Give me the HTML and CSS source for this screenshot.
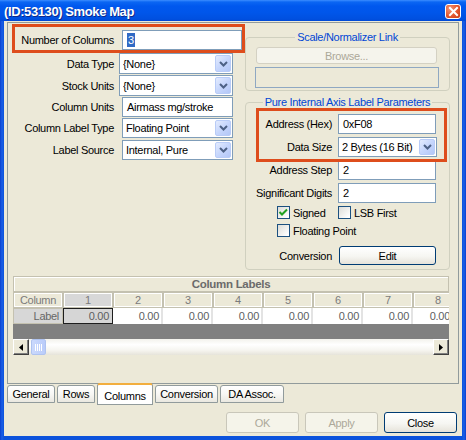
FILE: index.html
```html
<!DOCTYPE html>
<html>
<head>
<meta charset="utf-8">
<title>Smoke Map</title>
<link rel="stylesheet" href="styles.css">
</head>
<body>
<div class="window">
  <div class="titlebar">
    <span class="title">(ID:53130) Smoke Map</span>
    <span class="close"><svg width="11" height="11" viewBox="0 0 11 11"><path d="M2 2 L9 9 M9 2 L2 9" stroke="#fff" stroke-width="2" stroke-linecap="square"/></svg></span>
  </div>
  <div class="client">
    <div class="panel">
      <div class="top">
        <div class="left">
          <div class="row r1"><span class="lbl">Number of Columns</span><span class="edit ctl w120"><span class="hl">3</span></span></div>
          <div class="row r2"><span class="lbl">Data Type</span><span class="combo wide h21"><span class="ctext">{None}</span><span class="dd"><svg width="9" height="6" viewBox="0 0 9 6"><path d="M1 1 L4.5 4.5 L8 1" fill="none" stroke="#4D6185" stroke-width="2"/></svg></span></span></div>
          <div class="row r2"><span class="lbl">Stock Units</span><span class="combo wide h21"><span class="ctext">{None}</span><span class="dd"><svg width="9" height="6" viewBox="0 0 9 6"><path d="M1 1 L4.5 4.5 L8 1" fill="none" stroke="#4D6185" stroke-width="2"/></svg></span></span></div>
          <div class="row r2"><span class="lbl">Column Units</span><span class="edit ctl w111">Airmass mg/stroke</span></div>
          <div class="row r3"><span class="lbl">Column Label Type</span><span class="combo ctl w111"><span class="ctext">Floating Point</span><span class="dd"><svg width="9" height="6" viewBox="0 0 9 6"><path d="M1 1 L4.5 4.5 L8 1" fill="none" stroke="#4D6185" stroke-width="2"/></svg></span></span></div>
          <div class="row"><span class="lbl">Label Source</span><span class="combo ctl w111"><span class="ctext">Internal, Pure</span><span class="dd"><svg width="9" height="6" viewBox="0 0 9 6"><path d="M1 1 L4.5 4.5 L8 1" fill="none" stroke="#4D6185" stroke-width="2"/></svg></span></span></div>
        </div>
        <div class="right">
          <div class="group g1">
            <div class="gtitle">Scale/Normalizer Link</div>
            <div class="browse">Browse...</div>
            <div class="dfield"></div>
          </div>
          <div class="group g2">
            <div class="gtitle">Pure Internal Axis Label Parameters</div>
            <div class="prows">
              <div class="prow"><span class="plbl">Address (Hex)</span><span class="edit pctl">0xF08</span></div>
              <div class="prow"><span class="plbl">Data Size</span><span class="combo pcombo"><span class="ctext">2 Bytes (16 Bit)</span><span class="dd"><svg width="9" height="6" viewBox="0 0 9 6"><path d="M1 1 L4.5 4.5 L8 1" fill="none" stroke="#4D6185" stroke-width="2"/></svg></span></span></div>
              <div class="prow"><span class="plbl">Address Step</span><span class="edit pctl">2</span></div>
              <div class="prow"><span class="plbl">Significant Digits</span><span class="edit pctl">2</span></div>
            </div>
            <div class="checks">
              <div class="ckrow">
                <span class="ckitem w61"><span class="ck"><svg width="11" height="11" viewBox="0 0 11 11"><path d="M1.5 5 L4 7.5 L9 2.5" fill="none" stroke="#21A121" stroke-width="2"/></svg></span><span class="cktext">Signed</span></span>
                <span class="ckitem"><span class="ck"></span><span class="cktext">LSB First</span></span>
              </div>
              <div class="ckrow">
                <span class="ckitem"><span class="ck"></span><span class="cktext">Floating Point</span></span>
              </div>
            </div>
            <div class="conv"><span class="plbl">Conversion</span><span class="btn editbtn">Edit</span></div>
          </div>
        </div>
      </div>
      <div class="grid">
        <div class="ghead">Column Labels</div>
        <div class="grow">
          <span class="hc">Column</span><span class="hc sel">1</span><span class="hc">2</span><span class="hc">3</span><span class="hc">4</span><span class="hc">5</span><span class="hc">6</span><span class="hc">7</span><span class="hc">8</span>
        </div>
        <div class="grow">
          <span class="lc">Label</span><span class="vc cur">0.00</span><span class="vc">0.00</span><span class="vc">0.00</span><span class="vc">0.00</span><span class="vc">0.00</span><span class="vc">0.00</span><span class="vc">0.00</span><span class="vc last">0.00</span>
        </div>
        <div class="gdark"></div>
        <div class="hscroll">
          <span class="sbtn"><svg width="4" height="7" viewBox="0 0 4 7"><polygon points="4,0 0,3.5 4,7" fill="#000"/></svg></span>
          <span class="thumb"><svg width="7" height="7" viewBox="0 0 7 7"><path d="M0.5 0 V7 M2.5 0 V7 M4.5 0 V7 M6.5 0 V7" stroke="#fff" stroke-width="1"/></svg></span>
          <span class="track"></span>
          <span class="sbtn"><svg width="4" height="7" viewBox="0 0 4 7"><polygon points="0,0 4,3.5 0,7" fill="#000"/></svg></span>
        </div>
      </div>
    </div>
    <div class="tabs">
      <span class="tab t1">General</span>
      <span class="tab t2">Rows</span>
      <span class="tab t3 on">Columns</span>
      <span class="tab t4">Conversion</span>
      <span class="tab t5">DA Assoc.</span>
    </div>
    <div class="buttons">
      <span class="btn dis">OK</span>
      <span class="btn dis">Apply</span>
      <span class="btn">Close</span>
    </div>
  </div>
  <div class="mark m1"></div>
  <div class="mark m2"></div>
</div>
</body>
</html>
```

FILE: styles.css
```css
* { box-sizing: border-box; }
html, body { margin: 0; padding: 0; }
body {
  width: 466px; height: 440px; overflow: hidden; background: #fff;
  font-family: "Liberation Sans", Arial, sans-serif; font-size: 11px;
  letter-spacing: -0.3px; color: #000;
}
.window {
  position: relative; width: 466px; height: 440px;
  display: flex; flex-direction: column;
  background: linear-gradient(90deg, #0A3FCF, #1A5FE6 2px, #0B52DC 4px, #0B52DC 462px, #1A5FE6 464px, #0A3FCF);
}
.titlebar {
  height: 21px; flex: none; display: flex; align-items: center;
  justify-content: space-between; padding: 1px 5px 0 4px;
  background: linear-gradient(#3C8DFF 0, #0B66F3 2px, #0058EE 6px, #0056EA 60%, #0050E0 90%, #0049D6 100%);
}
.title {
  color: #fff; font-weight: bold; font-size: 13px; letter-spacing: -0.4px;
  text-shadow: 1px 1px 0 #0F2A8A;
}
.close {
  width: 16px; height: 15px; border: 1px solid #fff; border-radius: 3px;
  background: radial-gradient(circle at 30% 30%, #F39677, #E2552D 55%, #C53A14);
  display: flex; align-items: center; justify-content: center;
}
.client {
  flex: 1; margin: 0 4px 4px; background: #ECE9D8;
  padding: 1px 3px 0 3px; display: flex; flex-direction: column;
}
.panel { height: 362px; flex: none; border: 1px solid #919B9C; background: #ECE9D8; }
.top { display: flex; align-items: flex-start; }
.left { width: 237px; padding-top: 7px; }
.row { display: flex; align-items: center; margin-bottom: 1px; }
.row.r1 { margin-bottom: 3px; }
.row.r3 { margin-bottom: 2px; }
.lbl { width: 106px; flex: none; text-align: right; white-space: nowrap; }
.ctl { margin-left: 8px; }
.w120 { width: 120px; }
.w111 { width: 111px; }
.edit {
  height: 20px; border: 1px solid #7F9DB9; background: #fff; padding: 0 4px;
  display: flex; align-items: center; white-space: nowrap; overflow: hidden; flex: none;
}
.hl { background: #316AC5; color: #fff; padding: 1px 1px; }
.combo {
  height: 20px; border: 1px solid #7F9DB9; background: #fff; flex: none;
  display: flex; align-items: center; padding: 0 1px 0 3px;
}
.combo.h21 { height: 21px; }
.combo.wide { margin-left: 5px; width: 114px; }
.ctext { flex: 1; white-space: nowrap; overflow: hidden; }
.dd {
  flex: none; align-self: stretch; margin: 1px 0; width: 16px;
  border: 1px solid #B9CCF7; border-radius: 2px;
  background: linear-gradient(135deg, #E4ECFE, #C6D6FC 50%, #B3C7F7);
  display: flex; align-items: center; justify-content: center;
}
.right { width: 205px; }
.group { border: 1px solid #D0D0BF; border-radius: 4px; }
.g1 { margin-top: 14px; padding-bottom: 2px; }
.gtitle {
  display: table; margin: -7px auto 0; padding: 0 2px; line-height: 13px;
  background: #ECE9D8; color: #0046D5; white-space: nowrap;
}
.browse {
  margin: 3px 0 0 10px; width: 181px; height: 17px;
  border: 1px solid #D4D1C3; border-radius: 3px; background: #F5F4EC;
  color: #ACA899; display: flex; align-items: center; justify-content: center;
}
.dfield { margin: 3px 0 0 9px; width: 184px; height: 21px; border: 1px solid #8FA8C2; }
.g2 { margin-top: 11px; padding-bottom: 4px; }
.prows { margin-top: 5px; }
.prow { display: flex; align-items: center; margin-bottom: 3px; }
.plbl { width: 86px; flex: none; text-align: right; white-space: nowrap; }
.pctl { margin-left: 6px; width: 98px; }
.pcombo { margin-left: 6px; width: 99px; }
.checks { margin-top: 3px; padding-left: 31px; }
.ckrow { display: flex; align-items: center; height: 13px; }
.ckrow + .ckrow { margin-top: 5px; }
.ckitem { display: flex; align-items: center; }
.ckitem.w61 { width: 61px; }
.ck {
  width: 13px; height: 13px; flex: none; border: 1px solid #1C5180;
  background: linear-gradient(135deg, #DCDCD7, #FFFFFF 90%);
  display: flex; align-items: center; justify-content: center;
}
.cktext { margin-left: 3px; white-space: nowrap; }
.conv { display: flex; align-items: center; margin-top: 9px; }
.btn {
  width: 73px; height: 21px; flex: none; border: 1px solid #003C74; border-radius: 3px;
  display: flex; align-items: center; justify-content: center;
  background: linear-gradient(#FFFFFF, #F6F6F2 55%, #E6E3DA);
}
.btn.dis { border-color: #C9C7BA; background: #F5F4EA; color: #ACA899; }
.editbtn { margin-left: 7px; width: 97px; height: 19px; }
.grid { margin: 6px 0 0 5px; width: 436px; overflow: hidden; }
.ghead {
  height: 16px; border: 1px solid #C4C1B0; box-shadow: inset 1px 1px 0 #fff;
  text-align: center; font-weight: bold; color: #6B6B6B; line-height: 14px;
  font-size: 11.5px;
}
.grow { display: flex; height: 16px; }
.hc {
  flex: none; width: 50px; border: 1px solid #C4C1B0;
  box-shadow: inset 1px 1px 0 #fff, inset -1px -1px 0 #fff;
  text-align: center; color: #7B7B7B; line-height: 14px;
}
.hc.sel { background: #D8D8D8; }
.lc {
  flex: none; width: 50px; background: #D7D7D7; border: 1px solid #C4C1B0;
  text-align: right; padding-right: 3px; color: #666; line-height: 14px;
}
.vc {
  flex: none; width: 50px; background: #fff; border-right: 2px solid #E3E3E3;
  text-align: right; padding-right: 2px; color: #5E5E5E; line-height: 16px;
}
.vc.last { padding-right: 11px; }
.vc.cur { background: #D6D6D6; border: 1px solid #1E1E1E; line-height: 14px; padding-right: 3px; }
.gdark { height: 15px; background: #808080; }
.hscroll {
  height: 16px; display: flex;
  background: linear-gradient(#F3F2EC, #FFFFFF 35%, #F6F5F0 70%, #E6E4DA);
}
.sbtn {
  width: 16px; height: 16px; flex: none; background: #ECE9D8;
  border: 1px solid; border-color: #FFFFFF #404040 #404040 #FFFFFF;
  box-shadow: inset -1px -1px 0 #808080;
  display: flex; align-items: center; justify-content: center;
}
.thumb {
  width: 15px; flex: none; margin-left: 2px; border: 1px solid #AFC3F0; border-radius: 2px;
  background: linear-gradient(90deg, #CBD9FC, #BACCFA);
  display: flex; align-items: center; justify-content: center;
}
.track { flex: 1; }
.tabs { display: flex; align-items: flex-start; gap: 2px; margin-top: -1px; height: 22px; flex: none; }
.tab {
  height: 18px; margin-top: 2px; flex: none; border: 1px solid #919B9C;
  border-radius: 3px 3px 0 0;
  background: linear-gradient(#FFFFFF, #F8F8F5 50%, #EAE8E0);
  display: flex; align-items: center; justify-content: center; white-space: nowrap;
}
.tab.on { height: 22px; margin-top: 0; background: #FFFFFF; border-top: 2px solid #F2AE3E; padding-top: 2px; }
.t1 { width: 48px; }
.t2 { width: 38px; }
.t3 { width: 56px; }
.t4 { width: 63px; }
.t5 { width: 64px; }
.buttons { display: flex; justify-content: flex-end; gap: 6px; margin-top: 7px; padding-right: 2px; }
.mark { position: absolute; border: 3px solid #DE4D1C; }
.m1 { left: 12px; top: 24px; width: 233px; height: 29px; }
.m2 { left: 256px; top: 108px; width: 191px; height: 54px; }
```
